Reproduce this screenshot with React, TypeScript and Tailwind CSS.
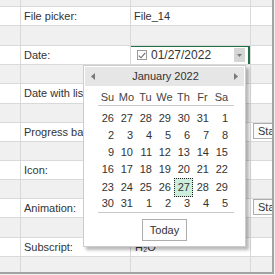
import React from "react";

const font = { fontFamily: '"Liberation Sans", Arial, sans-serif' };

interface RowProps {
  h: string;
  gray?: boolean;
  label?: string;
  value?: React.ReactNode;
  extra?: React.ReactNode;
}

function Row({ h, gray, label, value, extra }: RowProps) {
  const bg = gray ? "bg-[#f0f0f0]" : "bg-white";
  return (
    <div className={`flex ${h} ${bg} border-b border-[#d9d9d9]`}>
      <div className="w-[21px] shrink-0 border-r border-[#d9d9d9]" />
      <div className="w-[110px] shrink-0 border-r border-[#d9d9d9] pl-[3px] flex items-center overflow-hidden whitespace-nowrap">
        {label}
      </div>
      <div className="w-[120px] shrink-0 border-r border-[#d9d9d9] flex items-center overflow-hidden whitespace-nowrap">
        {value}
      </div>
      <div className="flex-1 overflow-hidden">{extra}</div>
    </div>
  );
}

function StartButton() {
  return (
    <div className="ml-[2px] mt-[0px] h-[16px] w-[40px] border border-[#adadad] bg-[#fbfbfb] pl-[4px] text-[11px] leading-[14px] text-[#333]">
      Start
    </div>
  );
}

const weeks = [
  [26, 27, 28, 29, 30, 31, 1],
  [2, 3, 4, 5, 6, 7, 8],
  [9, 10, 11, 12, 13, 14, 15],
  [16, 17, 18, 19, 20, 21, 22],
  [23, 24, 25, 26, 27, 28, 29],
  [30, 31, 1, 2, 3, 4, 5],
];

function Calendar() {
  return (
    <div className="absolute left-[83px] top-[65px] w-[163px] h-[182px] bg-white border border-[#cccccc] p-[1px] shadow-[3px_3px_3px_rgba(0,0,0,0.28)]">
      {/* header */}
      <div className="h-[19px] bg-[#e6e6e6] flex items-center justify-between px-[6px]">
        <svg width="4" height="7" viewBox="0 0 4 7">
          <path d="M4 0 L0 3.5 L4 7 Z" fill="#7a7a7a" />
        </svg>
        <span className="text-[11px] text-[#333] ml-[2px]">January 2022</span>
        <svg width="4" height="7" viewBox="0 0 4 7">
          <path d="M0 0 L4 3.5 L0 7 Z" fill="#7a7a7a" />
        </svg>
      </div>
      <div className="ml-[13px] w-[136px]">
        <div className="border-b border-[#c8c8c8] pt-[4px] h-[20px]">
          <div className="grid grid-cols-7 w-[133px] text-[11px] leading-[14px] text-[#444] text-center">
            {["Su", "Mo", "Tu", "We", "Th", "Fr", "Sa"].map((d) => (
              <div key={d}>{d}</div>
            ))}
          </div>
        </div>
        <div className="border-b border-[#c8c8c8] pt-[4px]">
          {weeks.map((w, i) => (
            <div key={i} className="grid grid-cols-7 w-[133px] h-[17px] text-[11px] text-[#333]">
              {w.map((d, j) =>
                i === 4 && j === 4 ? (
                  <div
                    key={j}
                    className="flex items-center justify-end pr-[2px] bg-[#cdeedc] border border-dotted border-[#222]"
                  >
                    {d}
                  </div>
                ) : (
                  <div key={j} className="flex items-center justify-end pr-[3px]">
                    {d}
                  </div>
                )
              )}
            </div>
          ))}
        </div>
      </div>
      <div className="flex justify-center mt-[6px]">
        <div className="h-[22px] w-[45px] border border-[#adadad] bg-[#fdfdfd] flex items-center justify-center text-[11px] text-[#333]">
          Today
        </div>
      </div>
    </div>
  );
}

export default function App() {
  return (
    <div className="relative w-[275px] h-[275px] overflow-hidden bg-[#f0f0f0] text-[11px] text-[#333]" style={font}>
      <div className="w-[274px] h-[274px] border-r-2 border-b-2 border-[#a3a3a3] overflow-hidden">
        <Row h="h-[7px]" gray />
        <Row h="h-[19px]" label="File picker:" value={<span className="pl-[3px]">File_14</span>} />
        <Row h="h-[20px]" gray />
        <Row
          h="h-[19px]"
          label="Date:"
          value={
            <div className="w-[122px] -ml-[2px] h-[21px] border-2 border-[#217346] flex items-center pl-[6px] bg-white">
              <div className="w-[10px] h-[10px] border border-[#9a9a9a] flex items-center justify-center">
                <svg width="8" height="7" viewBox="0 0 8 7">
                  <path d="M0.8 3.6 L3 5.8 L7.3 0.8" stroke="#6a6a6a" strokeWidth="1.1" fill="none" />
                </svg>
              </div>
              <span className="ml-[4px] text-[12px] text-[#333]">01/27/2022</span>
              <div className="ml-auto mr-[3px] w-[11px] h-[14px] bg-[#d6d6d6] flex items-center justify-center">
                <svg width="5" height="3" viewBox="0 0 5 3">
                  <path d="M0 0 L5 0 L2.5 3 Z" fill="#7a7a7a" />
                </svg>
              </div>
            </div>
          }
        />
        <Row h="h-[19px]" gray />
        <Row h="h-[20px]" label="Date with list" />
        <Row h="h-[19px]" gray />
        <Row h="h-[19px]" label="Progress bar" extra={<StartButton />} />
        <Row h="h-[19px]" gray />
        <Row h="h-[19px]" label="Icon:" />
        <Row h="h-[19px]" gray />
        <Row h="h-[19px]" label="Animation:" extra={<StartButton />} />
        <Row h="h-[20px]" gray />
        <Row h="h-[19px]" label="Subscript:" value={<span className="pl-[4px]">H₂O</span>} />
        <Row h="h-[19px]" gray />
      </div>
      <Calendar />
    </div>
  );
}
